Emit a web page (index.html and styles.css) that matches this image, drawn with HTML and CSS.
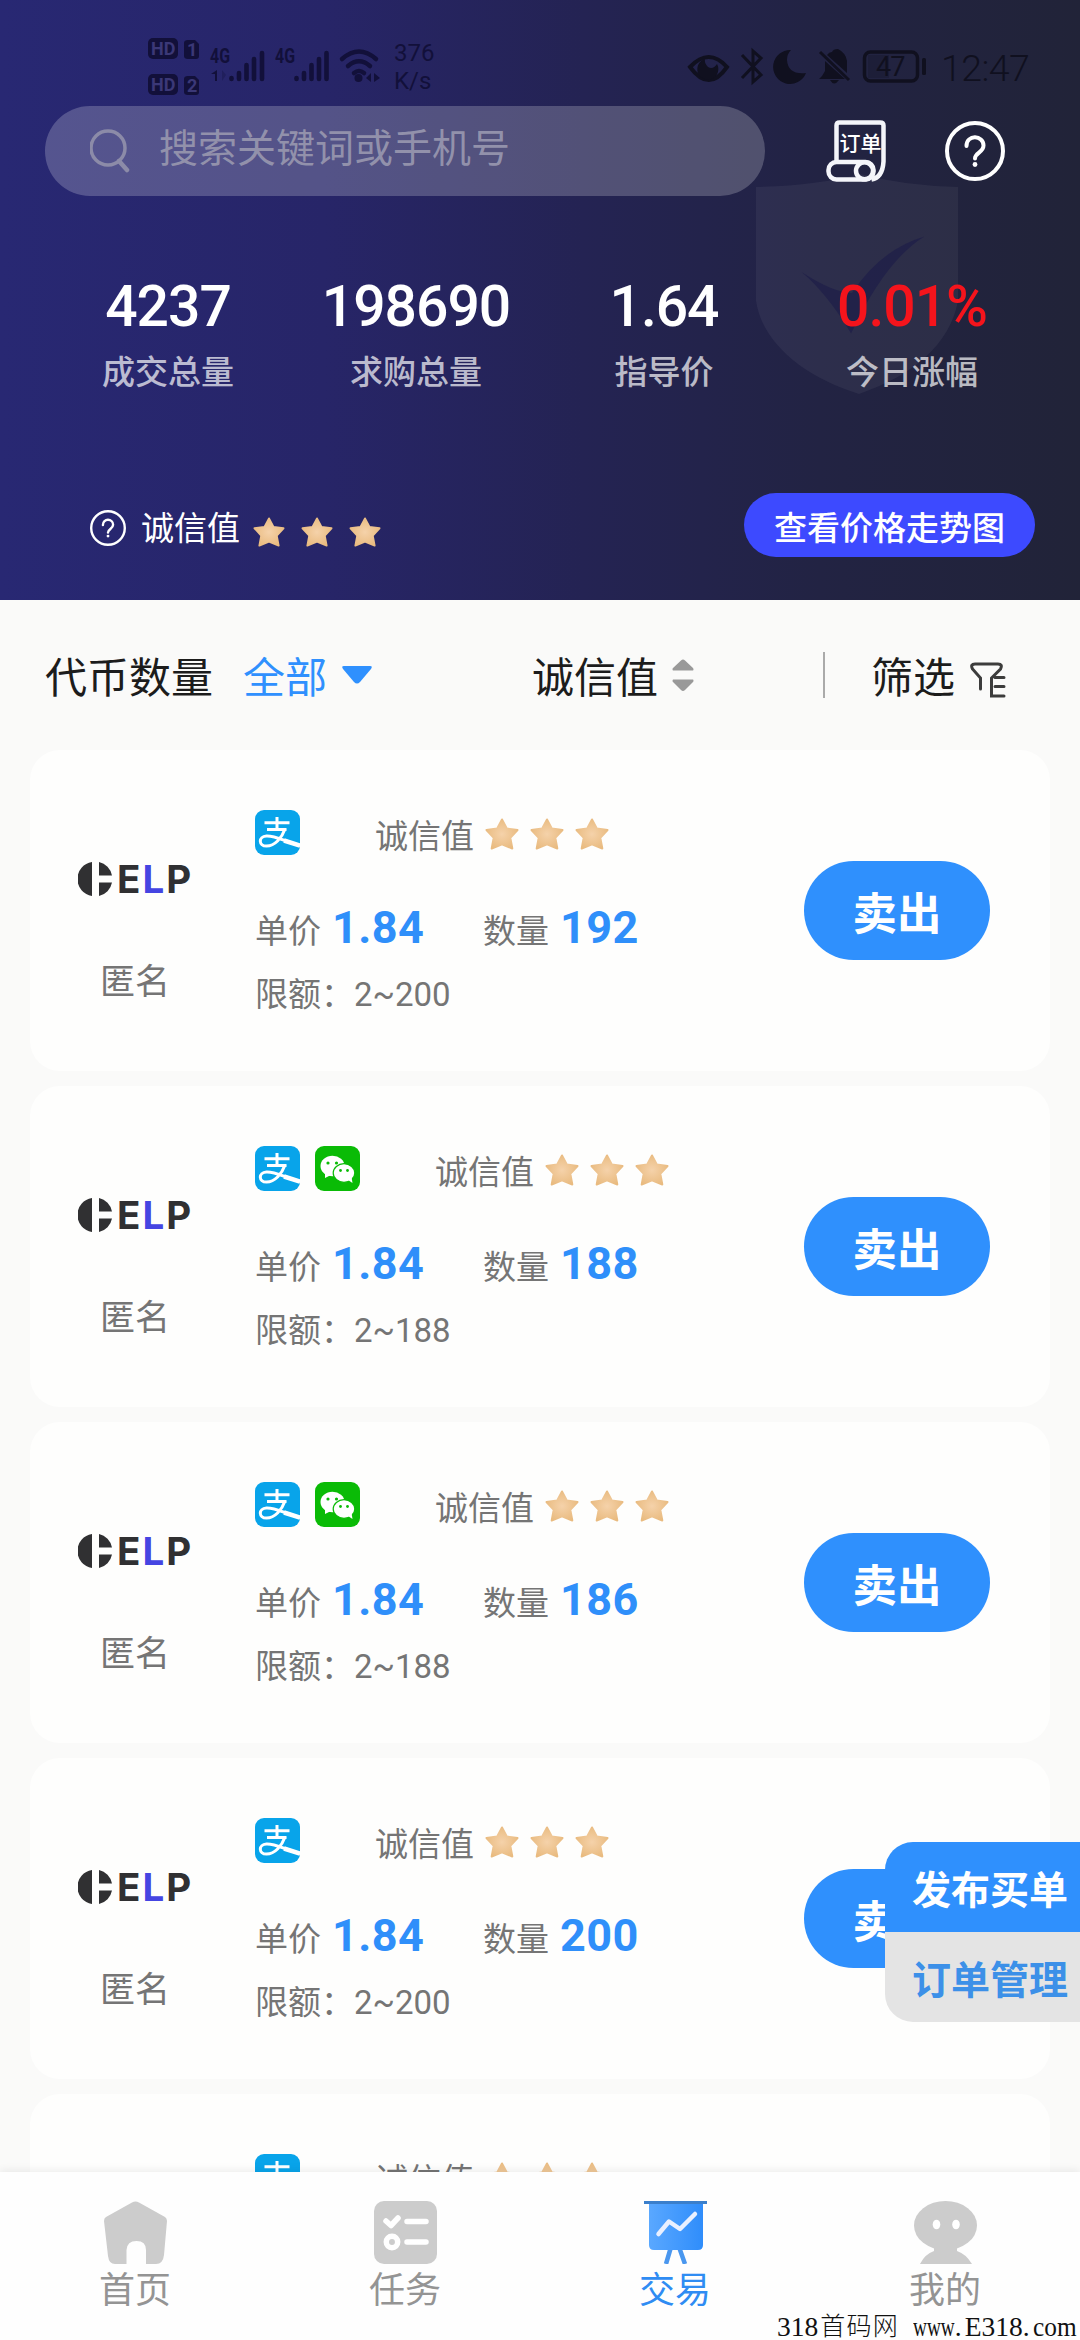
FILE: index.html
```html
<!DOCTYPE html>
<html lang="zh-CN">
<head>
<meta charset="utf-8">
<title>交易</title>
<link rel="stylesheet" href="styles.css">
</head>
<body>
<svg class="defs" width="0" height="0">
  <defs>
    <radialGradient id="gold" cx=".5" cy=".5" r=".55"><stop offset="0" stop-color="#f5d2aa"/><stop offset="1" stop-color="#e9bb80"/></radialGradient>
    <linearGradient id="board" x1="0" x2="1"><stop offset="0" stop-color="#5aa8ff"/><stop offset="1" stop-color="#2f8dfb"/></linearGradient>
    <symbol id="star" viewBox="0 0 34 32"><path d="M17 1.500 21.800 10.500 32.500 12 25.300 19.800 27.300 30.500 17 26.300 6.700 30.500 8.700 19.800 1.500 12 12.200 10.500Z" fill="url(#gold)" stroke="url(#gold)" stroke-width="2" stroke-linejoin="round"/></symbol>
    <symbol id="help" viewBox="0 0 60 60"><g fill="none" stroke="#fff" stroke-width="4" stroke-linecap="round"><circle cx="30" cy="30" r="28"/><path d="M21.500 25c0-12 17-11 17-.5 0 7-8.500 7-8.500 13"/></g><circle cx="30" cy="43.500" r="2.400" fill="#fff"/></symbol>
    <symbol id="alipay" viewBox="0 0 45 45"><rect width="45" height="45" rx="9" fill="#08a4ea"/><g fill="none" stroke="#fff" stroke-width="3"><path d="M22 7v13M9.500 12.700h25M12 19.500h19.500"/><path d="M30 19C27 27.500 20 36 11.500 36 3.500 36 3 26.500 11.500 26 20 25.500 29 31 45 35.500"/><path d="M29 30.500 45 35.500" stroke-width="4.500"/></g></symbol>
    <symbol id="wechat" viewBox="0 0 45 45"><rect width="45" height="45" rx="9" fill="#0abb06"/><g fill="#fff"><ellipse cx="17.500" cy="20" rx="12" ry="10.300"/><path d="M10 26v6l6-3z"/><ellipse cx="29" cy="27" rx="10.800" ry="9.300" stroke="#0abb06" stroke-width="1.200"/><path d="M33 34l4.500 3-1-6z"/></g><g fill="#0abb06"><circle cx="13" cy="17" r="1.600"/><circle cx="21.500" cy="17" r="1.600"/><circle cx="25.500" cy="24.500" r="1.400"/><circle cx="32.500" cy="24.500" r="1.400"/></g></symbol>
    <symbol id="mark" viewBox="0 0 34 34"><path d="M14 0v34A17.200 17.200 0 0 1 14 0ZM21 0A17 17 0 0 1 34 13.500H21ZM21 20.500H34A17 17 0 0 1 21 34Z" fill="#303032"/></symbol>
  </defs>
</svg>

<div class="app">
  <header class="hero">
    <svg class="shield" viewBox="0 0 206 222"><path d="M0 13Q60 12 105 0 150 12 204 13V128C196 172 158 204 104 222 48 205 6 170 0 128Z" fill="#fff" fill-opacity=".05"/><path d="M46 99Q78 120 97 120 126 76 170 63 130 88 96 161 72 121 46 99Z" fill="#1f1f48" fill-opacity=".8"/></svg>

    <div class="status">
      <svg class="status-left" viewBox="145 34 290 66" fill="#12103a">
        <rect x="148" y="38" width="30" height="21" rx="5"/><rect x="148" y="74" width="30" height="21" rx="5"/>
        <path d="M188 40h7l4 4v12q0 3-3 3h-8q-4 0-4-3V43q0-3 4-3zM188 76h7l4 4v12q0 3-3 3h-8q-4 0-4-3V79q0-3 4-3z"/>
        <g class="sim" fill="#3b3877"><text x="151" y="55">HD</text><text x="151" y="91">HD</text><text x="187" y="56">1</text><text x="187" y="92">2</text></g>
        <g class="net"><text x="210" y="63" textLength="20" lengthAdjust="spacingAndGlyphs">4G</text><text x="275" y="63" textLength="20" lengthAdjust="spacingAndGlyphs">4G</text></g>
        <g stroke="#12103a" stroke-width="4.600" stroke-linecap="round"><path d="M231.500 78v1M239 73v6M246.500 65v14M254 59V79M262 53v26M296.500 78v1M304 73v6M311.500 65v14M319 59V79M326.500 53v26"/></g>
        <path d="M217 70v11h-2v-7h-4z"/><path d="M222 70v11l4-6z" opacity=".3"/>
        <g fill="none" stroke="#12103a" stroke-width="4.500" stroke-linecap="round"><path d="M342 59q17-15 34 0M348 66q11-9.500 22 0M354 73q5-4 10 0"/></g><circle cx="358.500" cy="78" r="4"/><path d="M366 78l5-5v9zM380 78l-6-5v9z"/>
        <g class="rate"><text x="394" y="61">376</text><text x="394" y="89">K/s</text></g>
      </svg>
      <svg class="status-right" viewBox="685 34 350 66" fill="#10101f">
        <g fill="none" stroke="#10101f" stroke-width="4"><path d="M690 67Q709 47 727 67 709 93 690 67Z"/></g><path d="M705 59a10.500 10.500 0 1 0 12 5q-4 6-9 3-4-4-3-8z"/>
        <path d="M742 55l19 20-8 7V51l8 7-19 20" fill="none" stroke="#10101f" stroke-width="3"/>
        <path d="M791 50a17 17 0 1 0 15 23q-18 2-19-13 0-6 4-10z"/>
        <path d="M827 55q2-3 5-3 1-3 6-3 8 4 9 12v12zM822 76l3-5V61l20 18h-26zM830 80h9q-5 7-9 0z"/><path d="M820 52l29 28" stroke="#10101f" stroke-width="3"/>
        <rect x="864.500" y="52" width="53" height="29" rx="6" fill="none" stroke="#10101f" stroke-width="3.500"/><rect x="922" y="58" width="4" height="17" rx="1.500"/><rect x="868" y="55" width="21" height="23" opacity=".25"/>
        <text class="battery" x="876" y="76">47</text><text class="clock" x="941" y="81">12:47</text>
      </svg>
    </div>

    <div class="search-row">
      <div class="search">
        <svg width="40" height="44" viewBox="0 0 40 44" fill="none" stroke="#8c8ba8" stroke-width="3.500"><circle cx="18" cy="19" r="17"/><path d="M29 32l8 9" stroke-width="4.500" stroke-linecap="round"/></svg>
        <span>搜索关键词或手机号</span>
      </div>
      <svg class="order" viewBox="0 0 60 62"><g fill="none" stroke="#f4f5fa" stroke-width="4.500"><path d="M10.500 42V5.500q0-3 3-3H54q3.500 0 3.500 3v36q-1 16-12 18"/><rect x="2.500" y="42" width="45" height="17.500" rx="8"/><ellipse cx="38.500" cy="50.800" rx="8.500" ry="8.500"/></g><text x="13.500" y="31">订单</text></svg>
      <svg class="ask" viewBox="0 0 60 60"><use href="#help"/></svg>
    </div>

    <div class="stats">
      <div class="stat"><b>4237</b><span>成交总量</span></div>
      <div class="stat"><b>198690</b><span>求购总量</span></div>
      <div class="stat"><b>1.64</b><span>指导价</span></div>
      <div class="stat up"><b>0.01%</b><span>今日涨幅</span></div>
    </div>

    <div class="credit-row">
      <svg class="ask-small"><use href="#help"/></svg>
      <span class="credit-label">诚信值</span>
      <div class="hero-stars"><svg><use href="#star"/></svg><svg><use href="#star"/></svg><svg><use href="#star"/></svg></div>
      <div class="trend">查看价格走势图</div>
    </div>
  </header>

  <nav class="filters">
    <span>代币数量</span>
    <span class="all">全部</span>
    <svg class="caret" viewBox="0 0 30 18"><path d="M2 0h26q3 0 1 3L18 16q-3 3-6 0L1 3q-2-3 1-3z" fill="#2f90fe"/></svg>
    <span class="by-credit">诚信值</span>
    <svg class="sort" viewBox="0 0 22 33" fill="#999"><path d="M1 11.500Q0 10 1 9L9 1.500q2-2 4 0L21 9q1 1.500 0 2.500zM1 20.500Q0 22 1 23l8 8q2 2 4 0l8-8q1-1.500 0-2.500z"/></svg>
    <i class="rule"></i>
    <span>筛选</span>
    <svg class="funnel" viewBox="0 0 36 36" fill="none" stroke="#3c3c3c" stroke-width="3" stroke-linecap="round"><path d="M10.500 27V16L2.500 7Q0 2 5 2H28q5 0 2.500 5L21.500 16V34H34M25 15.500h9M25 24.500h9"/></svg>
  </nav>

  <main class="list">
    <article class="card">
      <div class="seller"><div class="logo"><svg><use href="#mark"/></svg><span>E<em>L</em>P</span></div><div class="name">匿名</div></div>
      <div class="info">
        <div class="pay"><svg><use href="#alipay"/></svg><span>诚信值</span><div class="stars"><svg><use href="#star"/></svg><svg><use href="#star"/></svg><svg><use href="#star"/></svg></div></div>
        <div class="price"><span>单价</span><b>1.84</b><span>数量</span><b>192</b></div>
        <div class="limit">限额：<span>2~200</span></div>
      </div>
      <div class="sell">卖出</div>
    </article>
    <article class="card">
      <div class="seller"><div class="logo"><svg><use href="#mark"/></svg><span>E<em>L</em>P</span></div><div class="name">匿名</div></div>
      <div class="info">
        <div class="pay"><svg><use href="#alipay"/></svg><svg><use href="#wechat"/></svg><span>诚信值</span><div class="stars"><svg><use href="#star"/></svg><svg><use href="#star"/></svg><svg><use href="#star"/></svg></div></div>
        <div class="price"><span>单价</span><b>1.84</b><span>数量</span><b>188</b></div>
        <div class="limit">限额：<span>2~188</span></div>
      </div>
      <div class="sell">卖出</div>
    </article>
    <article class="card">
      <div class="seller"><div class="logo"><svg><use href="#mark"/></svg><span>E<em>L</em>P</span></div><div class="name">匿名</div></div>
      <div class="info">
        <div class="pay"><svg><use href="#alipay"/></svg><svg><use href="#wechat"/></svg><span>诚信值</span><div class="stars"><svg><use href="#star"/></svg><svg><use href="#star"/></svg><svg><use href="#star"/></svg></div></div>
        <div class="price"><span>单价</span><b>1.84</b><span>数量</span><b>186</b></div>
        <div class="limit">限额：<span>2~188</span></div>
      </div>
      <div class="sell">卖出</div>
    </article>
    <article class="card">
      <div class="seller"><div class="logo"><svg><use href="#mark"/></svg><span>E<em>L</em>P</span></div><div class="name">匿名</div></div>
      <div class="info">
        <div class="pay"><svg><use href="#alipay"/></svg><span>诚信值</span><div class="stars"><svg><use href="#star"/></svg><svg><use href="#star"/></svg><svg><use href="#star"/></svg></div></div>
        <div class="price"><span>单价</span><b>1.84</b><span>数量</span><b>200</b></div>
        <div class="limit">限额：<span>2~200</span></div>
      </div>
      <div class="sell">卖出</div>
    </article>
    <article class="card">
      <div class="info solo">
        <div class="pay"><svg><use href="#alipay"/></svg><span>诚信值</span><div class="stars"><svg><use href="#star"/></svg><svg><use href="#star"/></svg><svg><use href="#star"/></svg></div></div>
      </div>
    </article>
  </main>

  <footer class="tabs">
    <div class="tab"><svg viewBox="0 0 63 63"><path d="M28 1.500q3.500-2 7 0L61 16q2 1.500 2 4l-3 34q-1 9-8 9H42V49q0-9-9.500-9T22.500 49V63H11q-6 0-7-8L0 20q0-3 2-4z" fill="#ccc"/></svg><span>首页</span></div>
    <div class="tab"><svg viewBox="0 0 63 63"><rect width="63" height="63" rx="10" fill="#ccc"/><g fill="none" stroke="#fff" stroke-width="5.500" stroke-linecap="round" stroke-linejoin="round"><path d="M12 20l5 4.500L24 17M33 20.500H52M33 41H52"/><circle cx="18" cy="41" r="5.700"/></g></svg><span>任务</span></div>
    <div class="tab on"><svg viewBox="0 0 63 63"><path d="M27 46l-5 17M35 46l6 17" stroke="#4a97ef" stroke-width="4.500"/><path d="M5 1h54v43q0 5-5 5H10q-5 0-5-5z" fill="url(#board)"/><path d="M0 0h63v3H0z" fill="#3b7fcb"/><path d="M14.500 33 25 20.500 36 28 51 13" fill="none" stroke="#e9f0ff" stroke-width="4.500" stroke-linecap="round" stroke-linejoin="round"/></svg><span>交易</span></div>
    <div class="tab"><svg viewBox="0 0 63 63"><ellipse cx="31.500" cy="24.500" rx="31.500" ry="24.500" fill="#ccc"/><path d="M20 44h23v6q9 3 15 13H6q5-10 14-13z" fill="#ccc"/><ellipse cx="22.500" cy="23.500" rx="3.800" ry="4.800" fill="#fff"/><ellipse cx="42" cy="23.500" rx="3.800" ry="4.800" fill="#fff"/></svg><span>我的</span></div>
  </footer>

  <div class="float"><div class="publish">发布买单</div><div class="manage">订单管理</div></div>
  <div class="watermark"><span>318</span><span class="cjk">首码网</span><span class="www">www</span><span class="dot">.</span><span>E318</span><span class="dot">.</span><span class="com">com</span></div>
</div>
</body>
</html>
```
FILE: styles.css
```css
* { box-sizing: border-box; }
body { margin: 0; font-family: Roboto, "Noto Sans CJK SC", sans-serif; }
svg { display: block; flex: none; }
.defs { position: absolute; }
.app { position: relative; width: 1080px; height: 2340px; overflow: hidden; display: flex; flex-direction: column; background: #fafaf9; }

.hero { position: relative; height: 600px; flex: none; background: linear-gradient(90deg, #282873 0%, #272568 30%, #242353 54%, #222343 76%, #212338 100%); }
.shield { position: absolute; left: 756px; top: 173px; width: 204px; height: 222px; }
.status { height: 106px; padding: 34px 45px 0 145px; display: flex; justify-content: space-between; }
.status-left { width: 290px; height: 66px; }
.status-right { width: 350px; height: 66px; }
.status text { font-family: Roboto, sans-serif; }
.sim { font-size: 18px; font-weight: 700; }
.net { font-size: 21px; font-weight: 700; }
.rate { font-size: 24px; }
.battery { font-size: 27px; font-weight: 400; letter-spacing: -1px; }
.clock { font-size: 37.5px; font-weight: 300; letter-spacing: -0.6px; }

.search-row { position: relative; height: 90px; padding-left: 45px; display: flex; }
.search { width: 720px; height: 90px; padding-left: 45px; border-radius: 45px; background: rgba(255,255,255,.21); display: flex; align-items: center; gap: 29px; color: #9291ab; font-size: 39px; line-height: 56px; }
.search span { margin-top: -5px; }
.order { width: 60px; height: 62px; margin: 14px 0 0 61px; }
.order text { font: 500 21px "Noto Sans CJK SC", sans-serif; fill: #fff; }
.ask { width: 60px; height: 60px; margin: 15px 0 0 59px; }

.stats { position: relative; display: grid; grid-template-columns: repeat(4, 248px); padding: 76px 44px 0; height: 297px; }
.stat { text-align: center; color: #fff; }
.stat b { display: block; font-size: 57px; font-weight: 500; line-height: 70px; letter-spacing: -1px; }
.stat span { display: block; margin-top: 7px; font-size: 33px; font-weight: 500; line-height: 48px; color: rgba(255,255,255,.7); }
.stat.up b { color: #f5141c; }

.credit-row { height: 64px; padding: 0 45px 0 90px; display: flex; align-items: center; color: #fff; font-size: 33px; }
.ask-small { width: 36px; height: 36px; margin-top: 6px; }
.credit-label { margin-left: 15px; line-height: 48px; margin-top: 8px; }
.hero-stars { display: flex; gap: 16px; margin: 14px 0 0 13px; }
.hero-stars svg { width: 32px; height: 30px; }
.trend { margin-left: auto; width: 291px; height: 64px; border-radius: 32px; background: #3d4aff; text-align: center; line-height: 71px; font-weight: 500; }

.filters { height: 150px; flex: none; padding: 8px 45px 0 45px; display: flex; align-items: center; font-size: 42px; line-height: 60px; color: #1c1c1c; }
.all { margin-left: 30px; color: #2f90fe; }
.caret { width: 30px; height: 18px; margin: -8px 0 0 15px; }
.by-credit { margin-left: 160px; }
.sort { width: 22px; height: 33px; margin: -8px 0 0 14px; }
.rule { width: 2px; height: 46px; margin: -9px 46px 0 129px; background: #aaa; }
.funnel { width: 36px; height: 36px; margin: 1px 0 0 15px; }

.list { flex: 1; min-height: 0; overflow: hidden; padding: 0 30px; display: flex; flex-direction: column; gap: 15px; }
.card { flex: none; height: 321px; border-radius: 30px; background: #fefefd; display: flex; color: #757575; font-size: 33px; }
.seller { width: 210px; padding-top: 112px; }
.logo { display: flex; align-items: center; height: 34px; padding-left: 48px; gap: 5px; }
.logo svg { width: 34px; height: 34px; }
.logo span { font: 700 38.5px/34px Inter, sans-serif; letter-spacing: 2px; color: #303032; }
.logo em { font-style: normal; color: #4545e2; }
.name { margin-top: 61px; text-align: center; font-size: 35px; line-height: 52px; }
.info { width: 564px; padding: 60px 0 0 15px; }
.info.solo { margin-left: 210px; }
.pay { height: 45px; display: flex; }
.pay > svg { width: 45px; height: 45px; margin-right: 15px; }
.pay > span { margin-left: 60px; line-height: 54px; }
.stars { display: flex; gap: 11px; margin: 8px 0 0 11px; }
.stars svg { width: 34px; height: 32px; }
.price { display: flex; align-items: baseline; height: 60px; margin-top: 43px; line-height: 60px; }
.price b { width: 108px; padding-left: 11px; font-size: 45px; letter-spacing: .4px; color: #2f8ffa; }
.price b + span { margin-left: 54px; width: 66px; }
.price span { width: 66px; }
.limit { margin-top: 12px; line-height: 50px; height: 50px; }
.sell { width: 186px; height: 99px; margin-top: 111px; border-radius: 50px; background: #2f90fd; color: #fff; font-size: 44.5px; font-weight: 700; text-align: center; line-height: 108px; }

.tabs { position: relative; height: 168px; flex: none; background: #fefefe; display: flex; box-shadow: 0 -2px 8px rgba(0,0,0,.07); }
.tab { width: 270px; padding-top: 29px; display: flex; flex-direction: column; align-items: center; color: #949494; font-size: 36px; line-height: 55px; }
.tab svg { width: 63px; height: 63px; }
.tab.on { color: #2f8cf3; }

.float { position: absolute; right: 0; top: 1842px; width: 195px; height: 180px; border-radius: 28px 0 0 28px; overflow: hidden; font-size: 39px; font-weight: 700; line-height: 99px; }
.float div { height: 90px; padding-left: 27px; white-space: nowrap; }
.publish { background: #2f90fd; color: #fff; }
.manage { background: #e4e4e4; color: #3c90e8; }

.watermark { position: absolute; left: 777px; top: 2311px; height: 29px; width: 303px; display: flex; white-space: nowrap; color: #111; font: 27.500px/32px "Liberation Serif", "Noto Sans CJK SC", serif; }
.watermark .cjk { font-weight: 300; font-size: 25px; letter-spacing: 1.2px; margin-left: 2px; }
.www { width: 42px; margin-left: 14px; transform: scaleX(.7); transform-origin: 0 50%; }
.dot { width: 14px; }
.com { transform: scaleX(.92); transform-origin: 0 50%; }
```
